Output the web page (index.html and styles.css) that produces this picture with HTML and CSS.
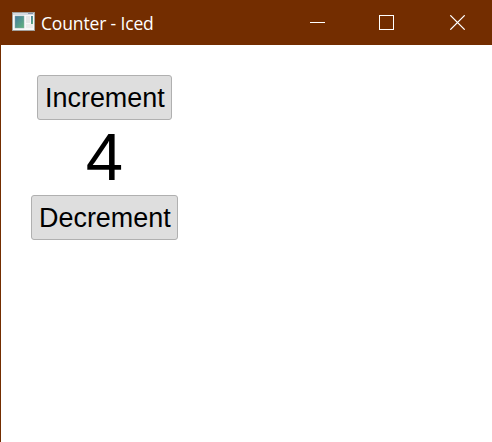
FILE: index.html
```html
<!DOCTYPE html>
<html lang="en">
<head>
<meta charset="utf-8">
<title>Counter - Iced</title>
<link rel="stylesheet" href="styles.css">
</head>
<body>
<div class="window">
  <header class="titlebar">
    <svg class="app-icon" width="24" height="20" viewBox="0 0 24 20">
      <defs>
        <linearGradient id="pane" x1="0" y1="0" x2="1" y2="1">
          <stop offset="0" stop-color="#4679a0"/>
          <stop offset="1" stop-color="#62b57c"/>
        </linearGradient>
      </defs>
      <rect x=".5" y=".5" width="22" height="18" fill="#f8f8f8" stroke="#a2a19e"/>
      <rect x="1" y="1" width="21" height="2" fill="#d5dae0"/>
      <rect x="16" y="1" width="5" height="1" fill="#8794ad"/>
      <rect x="3" y="4" width="9" height="12" fill="url(#pane)" stroke="#8ca9a6" stroke-width=".5"/>
      <rect x="14" y="4" width="4" height="7" fill="#e7e7e7"/>
      <rect x="14" y="12" width="7" height="4" fill="#ececec"/>
      <rect x="19" y="4" width="2" height="8" fill="url(#pane)"/>
    </svg>
    <h1 class="title">Counter - Iced</h1>
    <svg class="controls" width="156" height="15" viewBox="0 0 156 15" fill="none" stroke="#fff">
      <path d="M0 7.5h15"/>
      <rect x="69.5" y=".5" width="14" height="14"/>
      <path d="M140.3 .3l14.4 14.4M154.7 .3l-14.4 14.4" stroke-width="1.2"/>
    </svg>
  </header>
  <main class="content">
    <div class="counter">
      <button class="btn">Increment</button>
      <output class="value">4</output>
      <button class="btn">Decrement</button>
    </div>
  </main>
</div>
</body>
</html>
```
FILE: styles.css
```css
* {
  box-sizing: border-box;
}

body {
  margin: 0;
}

.window {
  display: flex;
  flex-direction: column;
  width: 492px;
  height: 442px;
  overflow: hidden;
  background: #fff;
  border-left: 1px solid #732d00;
}

.titlebar {
  display: flex;
  align-items: center;
  height: 45px;
  padding: 0 26px 0 11px;
  background: #732d00;
  color: #fff;
}

.app-icon {
  flex: none;
  margin-bottom: 2px;
}

.title {
  margin: 0 0 0 5px;
  font: 400 17.5px/24px "Open Sans", "Noto Sans", sans-serif;
  letter-spacing: -0.15px;
  white-space: nowrap;
}

.controls {
  flex: none;
  margin-left: auto;
}

.content {
  display: flex;
  flex: 1;
  align-items: flex-start;
  padding: 30px;
}

.counter {
  display: flex;
  flex-direction: column;
  align-items: center;
  font-family: "Liberation Sans", sans-serif;
  color: #000;
}

.btn {
  height: 45px;
  padding: 0 6px 0 7px;
  border: 1px solid #b0b0b0;
  border-radius: 3px;
  background: #dedede;
  color: #000;
  font: 26.95px/30px "Liberation Sans", sans-serif;
}

.value {
  height: 75px;
  font-size: 67.1px;
  line-height: 73px;
}
```
